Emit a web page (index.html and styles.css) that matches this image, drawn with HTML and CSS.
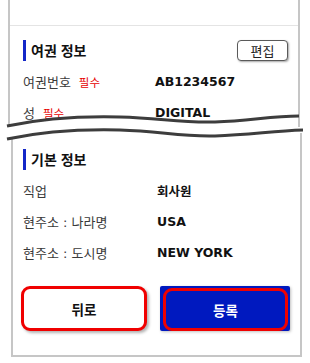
FILE: index.html
```html
<!DOCTYPE html>
<html lang="ko">
<head>
  <meta charset="UTF-8" />
  <meta name="viewport" content="width=device-width, initial-scale=1.0" />
  <title>여권 정보</title>
  <link rel="stylesheet" href="styles.css">
</head>
<body>
  <div class="page">
    <!-- 여권 정보 -->
    <div class="card card-top">
      <div class="prev"></div>
      <div class="section">
        <div class="title-row">
          <div class="title">여권 정보</div>
          <button class="edit-btn" type="button">편집</button>
        </div>
        <div class="row">
          <div class="label">여권번호<span class="req">필수</span></div>
          <div class="value">AB1234567</div>
        </div>
        <div class="row">
          <div class="label">성<span class="req">필수</span></div>
          <div class="value">DIGITAL</div>
        </div>
      </div>
    </div>

    <!-- 기본 정보 -->
    <div class="card card-bottom">
      <div class="section">
        <div class="title-row">
          <div class="title">기본 정보</div>
        </div>
        <div class="row">
          <div class="label">직업</div>
          <div class="value">회사원</div>
        </div>
        <div class="row">
          <div class="label">현주소 : 나라명</div>
          <div class="value">USA</div>
        </div>
        <div class="row">
          <div class="label">현주소 : 도시명</div>
          <div class="value">NEW YORK</div>
        </div>
        <div class="actions">
          <button class="btn btn-back" type="button">뒤로</button>
          <button class="btn btn-submit" type="button"><span>등록</span></button>
        </div>
      </div>
    </div>

    <!-- 생략 표시 -->
    <svg class="cut" width="310" height="36" viewBox="0 110 310 36">
      <path fill="#fff" d="M0 127 L7 126 C40 119, 80 116, 120 117 C160 118, 180 123, 215 122 C250 121, 270 116, 297 116 L297 130 C272 131, 250 135, 215 136 C180 137, 160 131, 120 130 C80 129, 40 132, 7 139 L0 140 Z" />
      <path fill="none" stroke="#3d3d3d" stroke-width="3" d="M7 126 C40 119, 80 116, 120 117 C160 118, 180 123, 215 122 C250 121, 270 116, 299 116" />
      <path fill="none" stroke="#3d3d3d" stroke-width="3" d="M7 139 C40 132, 80 129, 120 130 C160 131, 180 137, 215 136 C250 135, 272 131, 303 130" />
    </svg>
  </div>
</body>
</html>
```

FILE: styles.css
```css
* {
  box-sizing: border-box;
}

body {
  margin: 0;
  font-family: "DejaVu Sans", "Noto Sans CJK KR", sans-serif;
  background-color: #fff;
  color: #111;
}

.page {
  position: relative;
  width: 310px;
  height: 363px;
  overflow: hidden;
}

.card {
  border: 2px solid #c6c6c6;
  background-color: #fff;
}

.card-top {
  margin-left: 8px;
  width: 292px;
  height: 127px;
  border-top: 0;
  border-bottom: 0;
  overflow: hidden;
}

.prev {
  height: 26px;
  border-bottom: 1px solid #e4e4e4;
}

.card-top .section {
  padding: 14px 10px 0 13px;
}

.card-bottom {
  margin: 6px 0 0 11px;
  width: 291px;
  height: 224px;
  border-top: 0;
}

.card-bottom .section {
  padding: 16px 10px 0 10px;
}

.title-row {
  display: flex;
  justify-content: space-between;
  align-items: center;
  height: 21px;
}

.title {
  border-left: 3px solid #1428c8;
  padding-left: 5px;
  line-height: 21px;
  font-family: "Noto Sans CJK KR", sans-serif;
  font-weight: bold;
  font-size: 14px;
  color: #111;
}

.edit-btn {
  width: 51px;
  height: 21px;
  padding: 0;
  border: 1px solid #5a5a5a;
  border-radius: 4px;
  background-color: #fff;
  box-shadow: 1px 1px 2px rgba(0, 0, 0, 0.35);
  font-family: "Noto Sans CJK KR", sans-serif;
  font-size: 13px;
  color: #222;
}

.row {
  display: flex;
  align-items: center;
  height: 31px;
}

.title-row + .row {
  margin-top: 5px;
}

.label {
  width: 132px;
  font-size: 13px;
  color: #3a3a3a;
}

.card-bottom .label {
  width: 134px;
}

.req {
  margin-left: 8px;
  font-size: 11.5px;
  color: #e60000;
}

.value {
  font-weight: bold;
  font-size: 12.5px;
  color: #111;
}

.actions {
  display: flex;
  gap: 13px;
  margin: 18px 0 0 -2px;
}

.btn {
  height: 45px;
  padding: 0;
  font-family: "Noto Sans CJK KR", sans-serif;
  font-weight: bold;
  font-size: 13.5px;
}

.btn-back {
  width: 126px;
  border: 3px solid #f00000;
  border-radius: 9px;
  background-color: #fff;
  color: #111;
  box-shadow: 2px 2px 3px rgba(0, 0, 0, 0.3);
}

.btn-submit {
  display: flex;
  width: 130px;
  padding: 2px 2px 0 3px;
  border: 0;
  border-radius: 2px;
  background-color: #0019bf;
  color: #fff;
  box-shadow: 1px 1px 3px rgba(0, 0, 0, 0.25);
}

.btn-submit span {
  display: flex;
  align-items: center;
  justify-content: center;
  flex: 1;
  border: 3px solid #f00000;
  border-radius: 9px;
}

.cut {
  position: absolute;
  left: 0;
  top: 110px;
}
```
